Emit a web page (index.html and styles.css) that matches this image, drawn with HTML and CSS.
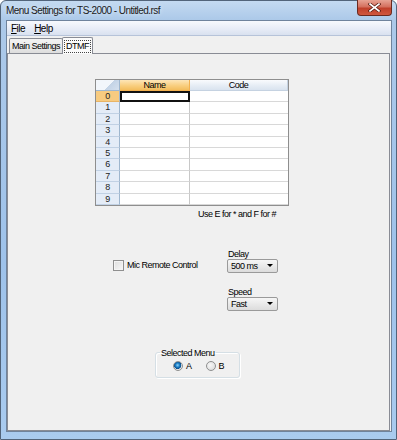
FILE: index.html
```html
<!DOCTYPE html>
<html lang="en">
<head>
  <meta charset="UTF-8">
  <title>Menu Settings for TS-2000 - Untitled.rsf</title>
  <link rel="stylesheet" href="styles.css">
</head>
<body>

  <div class="window">
    <div class="titlebar">
      <span class="title">Menu Settings for TS-2000 - Untitled.rsf</span>
      <div class="close">
        <svg width="13" height="9" viewBox="0 0 13 9">
          <path d="M2 1 L11 8 M11 1 L2 8" stroke="#5a1d14" stroke-width="3.2" stroke-linecap="square"/>
          <path d="M2 1 L11 8 M11 1 L2 8" stroke="#fff" stroke-width="1.6" stroke-linecap="square"/>
        </svg>
      </div>
    </div>

    <div class="client">
      <div class="menubar">
        <span class="menu"><u>F</u>ile</span>
        <span class="menu"><u>H</u>elp</span>
      </div>

      <div class="tabstrip">
        <div class="tab">Main Settings</div>
        <div class="tab active"><span class="focus">DTMF</span></div>
      </div>

      <div class="page">
        <div class="dgv">
          <div class="corner"></div>
          <div class="colhead sel">Name</div>
          <div class="colhead">Code</div>

          <div class="rowhead sel">0</div><div class="cell name current"></div><div class="cell"></div>
          <div class="rowhead">1</div><div class="cell name"></div><div class="cell"></div>
          <div class="rowhead">2</div><div class="cell name"></div><div class="cell"></div>
          <div class="rowhead">3</div><div class="cell name"></div><div class="cell"></div>
          <div class="rowhead">4</div><div class="cell name"></div><div class="cell"></div>
          <div class="rowhead">5</div><div class="cell name"></div><div class="cell"></div>
          <div class="rowhead">6</div><div class="cell name"></div><div class="cell"></div>
          <div class="rowhead">7</div><div class="cell name"></div><div class="cell"></div>
          <div class="rowhead">8</div><div class="cell name"></div><div class="cell"></div>
          <div class="rowhead">9</div><div class="cell name"></div><div class="cell"></div>
        </div>

        <div class="hint">Use E for * and F for #</div>

        <div class="options">
          <label class="check"><span class="box"></span>Mic Remote Control</label>
          <div class="combos">
            <div class="field">
              <div class="lbl">Delay</div>
              <div class="combo">500 ms<span class="arrow"></span></div>
            </div>
            <div class="field">
              <div class="lbl">Speed</div>
              <div class="combo">Fast<span class="arrow"></span></div>
            </div>
          </div>
        </div>

        <fieldset class="group">
          <legend>Selected Menu</legend>
          <div class="radios">
            <label class="radio"><span class="dot on"></span>A</label>
            <label class="radio"><span class="dot"></span>B</label>
          </div>
        </fieldset>
      </div>
    </div>
  </div>

</body>
</html>
```

FILE: styles.css
```css
body {
  margin: 0;
  font-family: 'Liberation Sans', sans-serif;
  font-size: 9px;
  letter-spacing: -0.5px;
  color: #000;
}

.window {
  width: 397px;
  height: 440px;
  box-sizing: border-box;
  border: 1px solid #52647a;
  border-radius: 6px 6px 0 0;
  background: linear-gradient(to bottom, #c4daf1, #acc9e9 19px, #9ec2ea 60%, #a9cbef);
  padding: 0 4px 7px 5px;
  display: flex;
  flex-direction: column;
}

.titlebar {
  height: 19px;
  display: flex;
  align-items: flex-start;
}

.title {
  margin-top: 3px;
  font-size: 10px;
  letter-spacing: -0.55px;
  line-height: 13px;
  color: #1b1b1b;
  text-shadow: 0 0 4px #e6f0fb;
}

.close {
  margin-left: auto;
  margin-top: -1px;
  width: 35px;
  height: 16px;
  box-sizing: border-box;
  border: 1px solid #6b2a20;
  border-top: none;
  border-radius: 0 0 4px 4px;
  background: linear-gradient(to bottom, #e7a394, #d4705e 45%, #c0402b 55%, #d0583f);
  display: flex;
  align-items: center;
  justify-content: center;
}

.client {
  flex: 1;
  display: flex;
  flex-direction: column;
  background: #f0f0f0;
  border: 1px solid #6f839c;
}

.menubar {
  height: 14px;
  border-bottom: 1px solid #b6c3d9;
  background: linear-gradient(to bottom, #f7f9fd, #e6ebf6 60%, #d9e1ef);
  display: flex;
  align-items: center;
  font-size: 10px;
}

.menu {
  padding: 0 5px 0 4px;
}

.tabstrip {
  height: 17px;
  display: flex;
  align-items: flex-end;
  padding-left: 2px;
  position: relative;
  z-index: 1;
}

.tab {
  height: 15px;
  box-sizing: border-box;
  border: 1px solid #898c95;
  border-bottom: none;
  border-radius: 2px 2px 0 0;
  background: linear-gradient(to bottom, #f3f3f3, #ebebeb 50%, #dddddd);
  padding: 0 2px;
  line-height: 14px;
}

.tab.active {
  height: 17px;
  margin-left: -1px;
  margin-bottom: -1px;
  background: #fbfbfb;
  padding: 2px 1px 0;
  line-height: 12px;
}

.focus {
  display: inline-block;
  border: 1px dotted #444;
  padding: 0 1px;
  line-height: 11px;
}

.page {
  flex: 1;
  border: 1px solid #898c95;
  margin-right: 1px;
}

/* data grid */
.dgv {
  margin: 25px 0 0 87px;
  width: 194px;
  box-sizing: border-box;
  border: 1px solid #8e8e8e;
  display: grid;
  grid-template-columns: 24px 70px 1fr;
  grid-template-rows: 11px repeat(10, 11.4px);
  background: #fff;
}

.corner {
  border-right: 1px solid #9eb6ce;
  border-bottom: 1px solid #9eb6ce;
  background: linear-gradient(135deg, #f2f6fb 55%, #c3d3e6 56%, #d4e0ee);
}

.colhead {
  border-right: 1px solid #c5d2e1;
  border-bottom: 1px solid #c5d2e1;
  background: linear-gradient(to bottom, #f9fbfd, #e6edf5 55%, #d9e3ef);
  text-align: center;
  line-height: 10px;
}

.colhead.sel {
  border-color: #f2b04f;
  background: linear-gradient(to bottom, #fde6b8, #f9cf80 55%, #f3bd5c);
}

.rowhead {
  border-right: 1px solid #9eb6ce;
  border-bottom: 1px solid #c1d1e4;
  background: #e4ecf7;
  text-align: center;
  line-height: 10px;
  color: #222;
}

.rowhead.sel {
  background: #f7cb80;
  border-bottom-color: #e8b466;
}

.cell {
  border-bottom: 1px solid #d8d8d8;
}

.cell.name {
  border-right: 1px solid #c8c8c8;
}

.cell.current {
  outline: 2px solid #111;
  outline-offset: -2px;
}

.hint {
  width: 194px;
  margin-left: 87px;
  box-sizing: border-box;
  padding-right: 13px;
  margin-top: 3px;
  text-align: right;
  line-height: 11px;
}

/* options */
.options {
  display: flex;
  align-items: flex-start;
  margin-top: 29px;
  padding-left: 105px;
}

.check {
  width: 114px;
  margin-top: 11px;
  display: flex;
  align-items: center;
  gap: 3px;
  line-height: 11px;
}

.box {
  width: 9px;
  height: 9px;
  border: 1px solid #8f8f8f;
  background: linear-gradient(135deg, #dedede, #f8f8f8);
  box-shadow: inset 0 0 0 1px #f4f4f4;
}

.combos {
  display: flex;
  flex-direction: column;
  gap: 14px;
}

.lbl {
  line-height: 10px;
  padding-left: 1px;
}

.combo {
  width: 51px;
  height: 14px;
  box-sizing: border-box;
  border: 1px solid #9a9a9a;
  border-radius: 2px;
  background: linear-gradient(to bottom, #f6f6f6, #e9e9e9 50%, #dcdcdc);
  padding-left: 3px;
  line-height: 12px;
  display: flex;
  align-items: center;
  justify-content: space-between;
}

.arrow {
  width: 0;
  height: 0;
  border-left: 3px solid transparent;
  border-right: 3px solid transparent;
  border-top: 3px solid #000;
  margin-right: 4px;
}

/* group box */
.group {
  margin: 37px 0 0 147px;
  width: 85px;
  height: 30px;
  box-sizing: border-box;
  border: 1px solid #d5dfe5;
  border-radius: 3px;
  box-shadow: inset 1px 1px 0 #fff, 1px 1px 0 #fff;
  padding: 3px 0 0 4px;
}

.group legend {
  padding: 0 1px;
  line-height: 10px;
  white-space: nowrap;
}

.radios {
  display: flex;
  gap: 14px;
  margin-left: 13px;
}

.radio {
  display: flex;
  align-items: center;
  gap: 3px;
  line-height: 10px;
}

.dot {
  width: 8px;
  height: 8px;
  border-radius: 50%;
  border: 1px solid #8e8f8f;
  background: radial-gradient(circle at 40% 40%, #f7f7f7, #d6d6d6);
}

.dot.on {
  background: radial-gradient(circle at 45% 40%, #8fd4f7 0, #1c7fc7 2px, #0b4f8c 3.5px, #e9e9e9 4px, #d2d2d2);
}
```
